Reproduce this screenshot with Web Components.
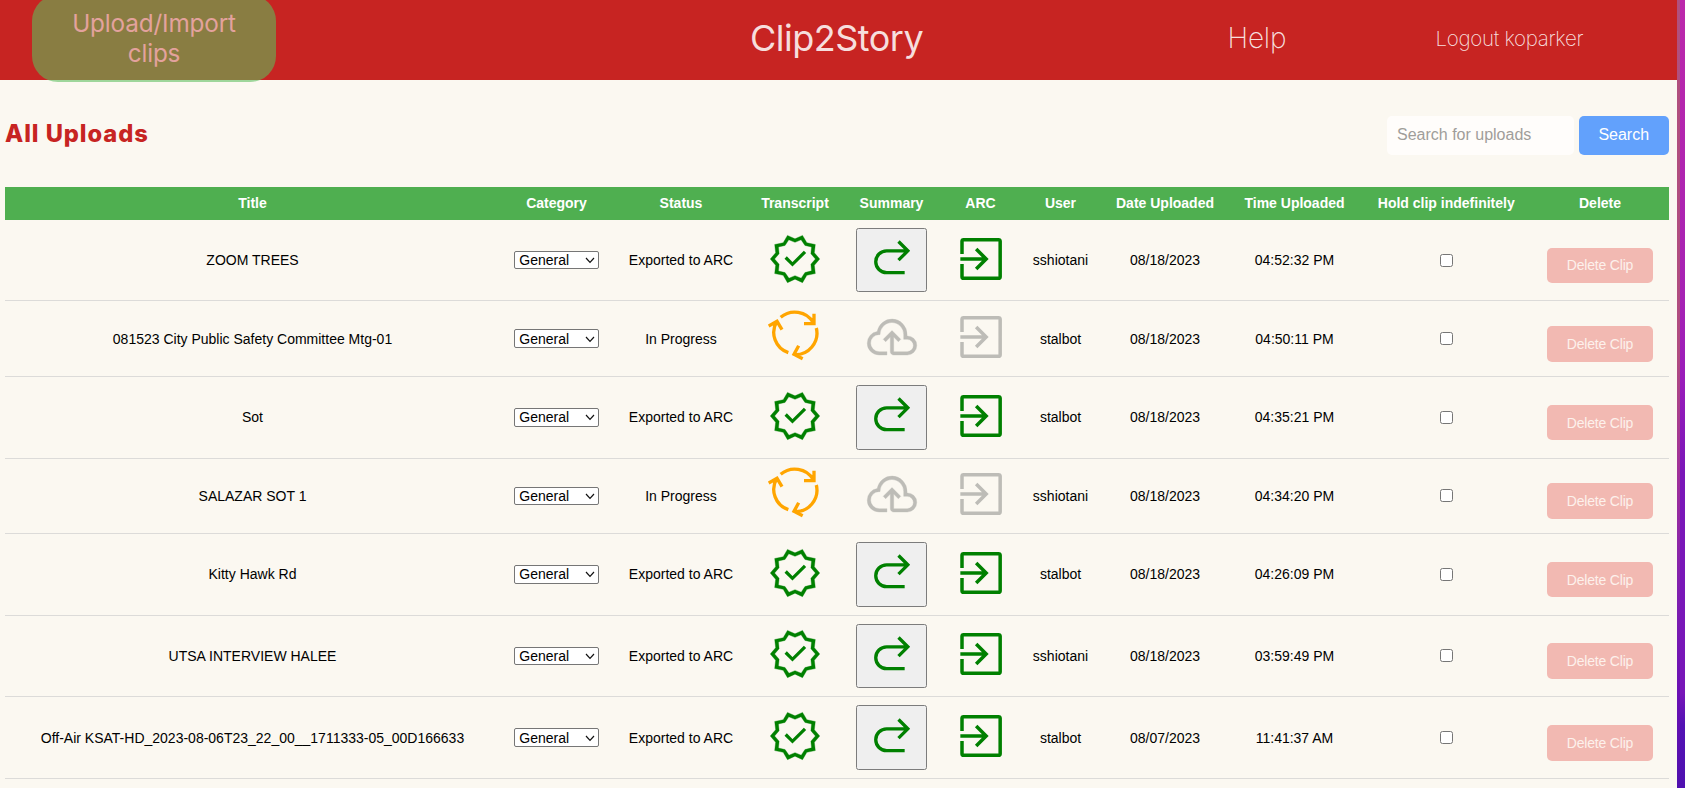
<!DOCTYPE html>
<html lang="en">
<head>
<meta charset="utf-8">
<title>Clip2Story</title>
<style>
html, body { margin: 0; height: 100%; overflow: hidden; background: #fbf8f1; font-family: "Liberation Sans", Arial, sans-serif; }
</style>
</head>
<body>
<c2s-app></c2s-app>
<script>
const define = (name, html, setup) => customElements.define(name, class extends HTMLElement {
  connectedCallback() {
    if (this.shadowRoot) return;
    const t = document.createElement('template');
    t.innerHTML = typeof html === 'function' ? html(this) : html;
    this.attachShadow({ mode: 'open' }).append(t.content.cloneNode(true));
    if (setup) setup(this);
  }
});

const COLUMNS = '495px 113px 136px 92px 101px 77px 83px 126px 133px 170.5px 137px';

const ICONS = {
  verified: ['0 -960 960 960', 54, 54, '<path fill="currentColor" stroke="currentColor" stroke-width="6" d="m346-60-76-130-151-31 17-147-96-112 96-111-17-147 151-31 76-131 134 62 134-62 77 131 150 31-17 147 96 111-96 112 17 147-150 31-77 130-134-62-134 62Zm27-79 107-45 110 45 67-100 117-30-12-119 81-92-81-94 12-119-117-28-69-100-108 45-110-45-67 100-117 28 12 119-81 94 81 92-12 121 117 28 70 100Z"/><path fill="none" stroke="currentColor" stroke-width="58" d="M314-507 435-386 658-607"/>'],
  cloud: ['0 -960 960 960', 54, 54, '<path fill="currentColor" stroke="currentColor" stroke-width="6" d="M251-160q-88 0-149.5-61.5T40-371q0-78 50-137t127-71q20-97 94-158.5T482-799q112 0 189 81.5T748-522v24q72-2 122 46.5T920-329q0 69-50 119t-119 50H510q-24 0-42-18t-18-42v-258l-83 83-43-43 156-156 156 156-43 43-83-83v258h241q45 0 77-32t32-77q0-45-32-77t-77-32h-63v-84q0-89-60.5-153T478-739q-89 0-150 64t-61 153h-19q-62 0-105 43.5T100-371q0 62 43.93 106.5T251-220h139v60H251Z"/>'],
  cycle: ['27 264 162 162', 54, 54, '<g fill="none" stroke="currentColor" stroke-width="10"><path d="M65 292A65 65 0 0 1 163 308M165 281v30h-30M172 324A65 65 0 0 1 105 404M119 377l-14 26 26 13M88 398A64 64 0 0 1 53 305M29 318l25-14 15 25"/></g>'],
  redo: ['315 38 162 162', 54, 54, '<path fill="none" stroke="currentColor" stroke-width="10" d="M434 160H380A32.5 32.5 0 0 1 380 94.500H443M415.500 66.500 443.500 94.500 415.500 122.500"/>'],
  exit: ['581 36 162 162', 54, 54, '<path fill="none" stroke="currentColor" stroke-width="10.500" d="M605 102V64Q605 59 610 59H714Q719.500 59 719.500 64V170Q719.500 175 714 175H610Q605 175 605 170V132M600 117H677M647.500 87 677.500 117 647.500 147"/>']
};

define('c2s-icon', el => {
  const [vb, w, h, body] = ICONS[el.getAttribute('name')];
  return `<style>:host{display:block;width:${w}px;height:${h}px}svg{display:block}</style>
  <svg width="${w}" height="${h}" viewBox="${vb}">${body}</svg>`;
});

define('c2s-nav', `<style>
:host{display:grid;grid-template-columns:32px 244px 474px 477.500px 207px auto;height:80px;background:#c72422;font-family:Inter,sans-serif;color:#f6dedd;white-space:nowrap;line-height:77px}
.upload{grid-column:2;height:86.500px;margin-top:-5px;box-sizing:border-box;padding-top:13px;border-radius:26px;background:linear-gradient(#897d42 85px,#9ed69b 85px);color:#e3a29d;font-size:24.300px;letter-spacing:-.15px;line-height:30px;text-align:center}
.brand{font-size:36px;letter-spacing:-.5px}
.help{font-size:28px;font-weight:200;letter-spacing:-.2px}
.logout{font-size:20.500px;font-weight:200;letter-spacing:-.3px;padding-left:1px}
</style>
<div class="upload">Upload/Import<br>clips</div>
<span></span><span class="brand">Clip2Story</span><span class="help">Help</span><span class="logout">Logout koparker</span>`);

define('c2s-search', `<style>
:host{display:flex;gap:4.500px;height:38.500px;font-size:16px;margin-top:3.500px}
input{width:187px;box-sizing:border-box;border:0;border-radius:5px;padding:0 10px;background:#fffdfb;font:inherit;margin:0}
input::placeholder{color:#9f9d9a}
button{width:90.500px;border:0;border-radius:5px;background:#62a1fc;color:#fff;font:inherit;padding:0}
</style><input placeholder="Search for uploads"><button>Search</button>`);

define('c2s-toolbar', `<style>
:host{display:flex;justify-content:space-between;align-items:center;height:107.300px;box-sizing:border-box;padding:0 8px 0 5px}
h1{margin:0;font:800 23.700px Inter,sans-serif;letter-spacing:.95px;color:#c72422;padding-top:0}
</style><h1>All Uploads</h1><slot></slot>`);

define('c2s-select', `<style>
:host{display:grid;width:84.500px;height:18.600px}
select,svg{grid-area:1/1}
select{appearance:none;box-sizing:border-box;width:100%;height:100%;border:1px solid #767676;border-radius:2px;background:#fff;color:#000;font:14px "Liberation Sans",Arial,sans-serif;padding:0 0 0 4px;margin:0}
svg{justify-self:end;align-self:center;margin-right:3.500px;pointer-events:none}
</style><select><option>General</option></select><svg width="10" height="8" viewBox="0 0 10 8"><path d="M1 2 5 6.300 9 2" fill="none" stroke="#111" stroke-width="1.200"/></svg>`);

define('c2s-delete', `<style>
:host{display:block;margin-top:10.600px}
button{display:block;width:105.700px;height:35.600px;padding:0;border:0;border-radius:5px;background:#f2b9b2;color:#fdf1ec;font:14px "Liberation Sans",Arial,sans-serif;letter-spacing:-.2px}
</style><button><slot></slot></button>`);

define('c2s-row', el => {
  const [title, done, user, date, time] = JSON.parse(el.dataset.clip);
  return `<style>
:host{display:grid;grid-template-columns:${COLUMNS};height:${done ? 81.6 : 75.5}px;box-sizing:border-box;border-bottom:1px solid #dcdbd9;align-items:center;justify-items:center;font-size:14px;color:#000;white-space:nowrap}
.t{color:${done ? 'green' : 'orange'};margin-top:${done ? -3 : -8}px}
.a{color:${done ? 'green' : '#bdbcb7'};margin-top:-3px}
.s{color:#bdbcb7;margin-top:-3px}
.redo{display:grid;place-items:center;box-sizing:border-box;width:71.500px;height:64.500px;border:1px solid #7c7c7c;border-radius:2.500px;background:#efefef;padding:0;color:green}
.redo c2s-icon{margin-top:-2px}
input{appearance:none;margin:0;width:13px;height:13px;border:1px solid #767676;border-radius:2.500px;background:#fff;box-sizing:border-box}
</style>
<span>${title}</span><c2s-select></c2s-select><span>${done ? 'Exported to ARC' : 'In Progress'}</span>
<c2s-icon class="t" name="${done ? 'verified' : 'cycle'}"></c2s-icon>
${done ? '<button class="redo"><c2s-icon name="redo"></c2s-icon></button>' : '<c2s-icon class="s" name="cloud"></c2s-icon>'}
<c2s-icon class="a" name="exit"></c2s-icon>
<span>${user}</span><span>${date}</span><span>${time}</span><input type="checkbox"><c2s-delete>Delete Clip</c2s-delete>`;
});

const CLIPS = [
  ['ZOOM TREES', 1, 'sshiotani', '08/18/2023', '04:52:32 PM'],
  ['081523 City Public Safety Committee Mtg-01', 0, 'stalbot', '08/18/2023', '04:50:11 PM'],
  ['Sot', 1, 'stalbot', '08/18/2023', '04:35:21 PM'],
  ['SALAZAR SOT 1', 0, 'sshiotani', '08/18/2023', '04:34:20 PM'],
  ['Kitty Hawk Rd', 1, 'stalbot', '08/18/2023', '04:26:09 PM'],
  ['UTSA INTERVIEW HALEE', 1, 'sshiotani', '08/18/2023', '03:59:49 PM'],
  ['Off-Air KSAT-HD_2023-08-06T23_22_00__1711333-05_00D166633', 1, 'stalbot', '08/07/2023', '11:41:37 AM']
];

define('c2s-table', `<style>
:host{display:block;margin:0 8px 0 5px}
.head{display:grid;grid-template-columns:${COLUMNS};height:32.600px;box-sizing:border-box;padding-bottom:2px;align-items:center;justify-items:center;background:#4faf50;color:#fff;font-weight:700;font-size:14px;white-space:nowrap}
</style><div class="head">${['Title', 'Category', 'Status', 'Transcript', 'Summary', 'ARC', 'User', 'Date Uploaded', 'Time Uploaded', 'Hold clip indefinitely', 'Delete'].map(h => `<span>${h}</span>`).join('')}</div>`,
  el => CLIPS.forEach(c => {
    const row = document.createElement('c2s-row');
    row.dataset.clip = JSON.stringify(c);
    el.shadowRoot.append(row);
  }));

define('c2s-app', `<style>
:host{display:grid;grid-template-columns:1677px 8px;height:788px;overflow:hidden}
.edge{display:grid;grid-template-columns:3px 5px}
.edge i:first-child{background:linear-gradient(#b0507e,#b04c80 45%,#a0309a 60%,#8020b0 75%,#6a10b4 88%,#4f10ae)}
.edge i:last-child{background:linear-gradient(#bc28ab,#a622b4 38%,#9a1cba 48%,#7a16b8 60%,#7816b8 88%,#5212b4 92%,#4f10b0)}
</style>
<main><c2s-nav></c2s-nav><c2s-toolbar><c2s-search></c2s-search></c2s-toolbar><c2s-table></c2s-table></main>
<div class="edge"><i></i><i></i></div>`);
</script>
</body>
</html>
